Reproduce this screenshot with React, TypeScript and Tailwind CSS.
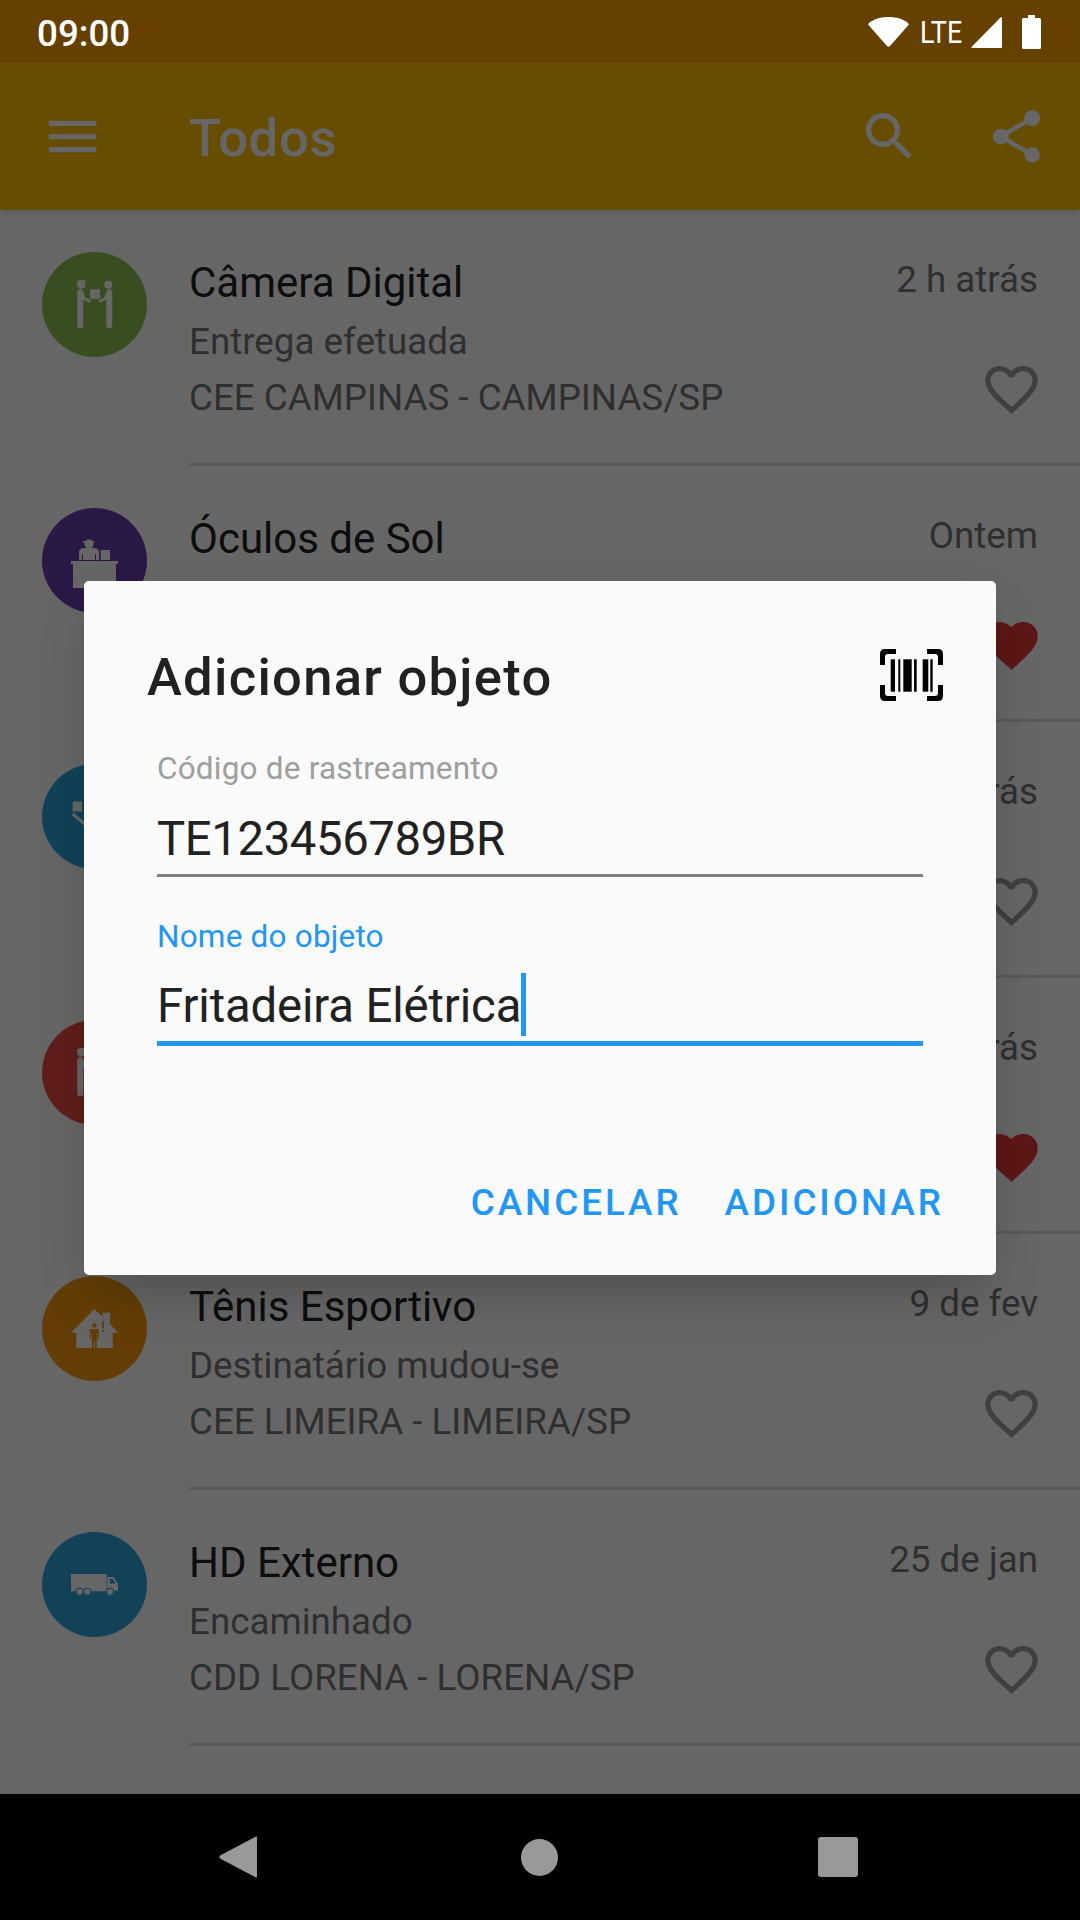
import React from 'react';
import { MdMenu, MdSearch, MdShare, MdFavorite, MdFavoriteBorder } from 'react-icons/md';

function HandoffIcon() {
  return (
    <svg viewBox="0 0 105 105" className="w-[105px] h-[105px]" fill="#fff">
      <circle cx="39.300" cy="32.700" r="4" />
      <path d="M34.500 31q1-3 5-3t5 1.500l-2 1.500Z" />
      <circle cx="66.300" cy="32.700" r="4" />
      <rect x="48" y="37.300" width="10" height="9.400" />
      <rect x="35.300" y="37.300" width="6" height="39" rx="3" />
      <rect x="64.300" y="37.300" width="6" height="39" rx="3" />
      <path d="M39.500 40l2.500 6.500 6.500 3" stroke="#fff" strokeWidth="3" fill="none" />
      <path d="M66.100 40l-2.500 6.500-6.500 3" stroke="#fff" strokeWidth="3" fill="none" />
    </svg>
  );
}

function DeskIcon() {
  return (
    <svg viewBox="0 0 105 105" className="w-[105px] h-[105px]" fill="#fff">
      <circle cx="47" cy="36" r="4.500" />
      <path d="M41 33h11v2H41Z" />
      <path d="M37 52v-7q0-5 5-5h10q5 0 5 5v7h-3v-6h-1v6H41v-6h-1v6Z" />
      <rect x="58.700" y="42" width="9.300" height="10" />
      <rect x="29" y="53" width="47" height="3" />
      <rect x="31" y="56" width="43" height="24" />
    </svg>
  );
}

function PackageIcon() {
  return (
    <svg viewBox="0 0 105 105" className="w-[105px] h-[105px]" fill="#fff">
      <rect x="30.700" y="37.500" width="9.300" height="10" />
      <path d="M30.700 50 45 62" stroke="#fff" strokeWidth="3" fill="none" />
    </svg>
  );
}

function HouseIcon({ color }: { color: string }) {
  return (
    <svg viewBox="0 0 105 105" className="w-[105px] h-[105px]" fill="#fff">
      <path d="M52.300 33 60.700 41V36.700H68V48L76 56.700H70.700V72H34.300V56.700H29Z" />
      <circle cx="52.300" cy="49.500" r="2.200" fill={color} />
      <path d="M47.800 53h9v9.500h-1.300V57h-.7v15h-2.100v-7h-.8v7h-2.100V57h-.7v5.500h-1.300Z" fill={color} />
      <rect x="60.200" y="45" width="1.800" height="7.500" fill={color} />
      <rect x="60.200" y="54" width="1.800" height="1.800" fill={color} />
    </svg>
  );
}

function TruckIcon({ color }: { color: string }) {
  return (
    <svg viewBox="0 0 105 105" className="w-[105px] h-[105px]" fill="#fff">
      <rect x="29" y="42" width="35.700" height="17.300" />
      <path d="M65.300 45h6.500l3 5.500 1.200 1.500v6.500l-10.700.8Z" />
      <path d="M67.800 47h3.200l2.300 4.500h-5.500Z" fill={color} />
      <circle cx="37.700" cy="59.700" r="4" fill={color} />
      <circle cx="45.300" cy="59.700" r="4" fill={color} />
      <circle cx="68" cy="59.700" r="4" fill={color} />
      <circle cx="37.700" cy="59.700" r="3" />
      <circle cx="45.300" cy="59.700" r="3" />
      <circle cx="68" cy="59.700" r="3" />
    </svg>
  );
}

const items = [
  { color: '#8FC352', icon: <HandoffIcon />, title: 'Câmera Digital', time: '2 h atrás', status: 'Entrega efetuada', place: 'CEE CAMPINAS - CAMPINAS/SP', fav: false },
  { color: '#6A3FB0', icon: <DeskIcon />, title: 'Óculos de Sol', time: 'Ontem', status: '', place: '', fav: true },
  { color: '#2BA6DC', icon: <PackageIcon />, title: '', time: '3 d atrás', status: '', place: '', fav: false },
  { color: '#F04B45', icon: <HandoffIcon />, title: '', time: '5 d atrás', status: '', place: '', fav: true },
  { color: '#FA9A0F', icon: <HouseIcon color="#FA9A0F" />, title: 'Tênis Esportivo', time: '9 de fev', status: 'Destinatário mudou-se', place: 'CEE LIMEIRA - LIMEIRA/SP', fav: false },
  { color: '#2BA6DC', icon: <TruckIcon color="#2BA6DC" />, title: 'HD Externo', time: '25 de jan', status: 'Encaminhado', place: 'CDD LORENA - LORENA/SP', fav: false },
];

export default function App() {
  return (
    <div className="w-[1080px] h-[1920px] flex flex-col overflow-hidden bg-black font-['Roboto',sans-serif]">
      {/* status bar */}
      <div className="h-[63px] shrink-0 bg-[#664000] flex items-center pl-[37px] text-white">
        <span className="pt-[5px] text-[36.750px] font-medium">09:00</span>
        <div className="ml-auto flex items-center pr-[39px]">
          <svg viewBox="0 0 41 30" className="w-[41px] h-[30px] fill-white">
            <path d="M19 29 0.500 8Q0 7 1 6C6 2 12 0 20.500 0S35 2 40 6Q41 7 40.500 8L22 29Q20.500 30.500 19 29Z" />
          </svg>
          <span className="ml-[11px] w-[43px] text-[32px] leading-none origin-left scale-x-[.84]">LTE</span>
          <svg viewBox="0 0 31 31" className="mt-[2px] ml-[8px] w-[31px] h-[31px] fill-white">
            <path d="M31 1V30Q31 31 30 31H1Q0 31 0.500 30L29.500 0.500Q31 0 31 1Z" />
          </svg>
          <svg viewBox="0 0 19 34" className="ml-[20px] w-[19px] h-[34px] fill-white">
            <path d="M6 0H13V3H17.500Q19 3 19 4.500V32.500Q19 34 17.500 34H1.500Q0 34 0 32.500V4.500Q0 3 1.500 3H6Z" />
          </svg>
        </div>
      </div>

      <div className="relative flex-1 overflow-hidden bg-white">
        {/* toolbar */}
        <div className="h-[147px] bg-[#FFC107] flex items-center pl-[41px] pr-[32px] text-white shadow-md relative">
          <MdMenu size={63} />
          <span className="ml-[85px] pt-[4px] text-[52.500px] font-medium tracking-[.7px]">Todos</span>
          <div className="ml-auto flex gap-[64px]">
            <MdSearch size={63} />
            <MdShare size={63} />
          </div>
        </div>

        {/* list */}
        <div className="flex flex-col">
          {items.map((item, i) => (
            <div key={i} className="h-[256px] flex pl-[42px]">
              <div className="w-[105px] h-[105px] mt-[42px] rounded-full shrink-0" style={{ backgroundColor: item.color }}>
                {item.icon}
              </div>
              <div className="ml-[42px] flex-1 flex justify-between pr-[42px] border-b-[3px] border-[#dfdfdf]">
                <div className="pt-[48px] flex flex-col">
                  <div className="h-[50px] leading-[50px] text-[42px] text-[#212121]">{item.title}</div>
                  <div className="h-[46px] leading-[46px] mt-[11px] text-[36.750px] text-[#757575]">{item.status}</div>
                  <div className="h-[46px] leading-[46px] mt-[10px] text-[36.750px] text-[#757575]">{item.place}</div>
                </div>
                <div className="pt-[45px] flex flex-col items-end">
                  <div className="h-[50px] leading-[50px] text-[36.750px] text-[#757575]">{item.time}</div>
                  <div className="mt-[53px] -mr-[5px]">
                    {item.fav ? <MdFavorite size={63} color="#E53935" /> : <MdFavoriteBorder size={63} color="#9e9e9e" />}
                  </div>
                </div>
              </div>
            </div>
          ))}
        </div>

        {/* scrim + dialog */}
        <div className="absolute inset-0 bg-black/60 flex items-center justify-center">
          <div className="-mt-[2px] w-[912px] h-[694px] bg-[#fafafa] rounded-[5px] shadow-2xl flex flex-col">
            <div className="mt-[67px] h-[60px] pl-[63px] pr-[53px] flex items-center justify-between">
              <span className="text-[52.500px] font-medium tracking-[1.300px] text-[#212121]">Adicionar objeto</span>
              <svg viewBox="0 0 63 52" className="mb-[6px] w-[63px] h-[52px]" fill="#000">
                <path d="M0 16V5Q0 0 5 0H16V5H8Q5 5 5 8V16Z" />
                <path d="M63 16V5Q63 0 58 0H47V5H55Q58 5 58 8V16Z" />
                <path d="M0 36V47Q0 52 5 52H16V47H8Q5 47 5 44V36Z" />
                <path d="M63 36V47Q63 52 58 52H47V47H55Q58 47 58 44V36Z" />
                <rect x="10.700" y="10.300" width="4.300" height="32.400" />
                <rect x="18.300" y="10.300" width="2" height="32.400" />
                <rect x="23.300" y="10.300" width="8.400" height="32.400" />
                <rect x="34" y="10.300" width="2.700" height="32.400" />
                <rect x="42.700" y="10.300" width="5.600" height="32.400" />
                <rect x="50.300" y="10.300" width="2.400" height="32.400" />
              </svg>
            </div>
            <div className="mt-[42px] mx-[73px]">
              <div className="h-[38px] leading-[38px] text-[31.500px] tracking-[.2px] text-[#9e9e9e]">Código de rastreamento</div>
              <div className="mt-[21px] h-[68px] leading-[60px] text-[47.250px] tracking-[-.38px] text-[#212121] border-b-[3px] border-[#808080]">TE123456789BR</div>
            </div>
            <div className="mt-[41px] mx-[73px]">
              <div className="h-[38px] leading-[38px] text-[31.500px] tracking-[.2px] text-[#2196F3]">Nome do objeto</div>
              <div className="relative mt-[20px] h-[70px] leading-[60px] text-[47.250px] tracking-[-.13px] text-[#212121] border-b-[5px] border-[#2196F3]">
                Fritadeira Elétrica
                <span className="absolute left-[364px] -top-[3px] w-[5px] h-[63px] bg-[#2196F3]" />
              </div>
            </div>
            <div className="mt-[137px] pr-[52px] flex justify-end gap-[43px] h-[40px] leading-[40px] text-[36.750px] font-medium tracking-[3px] text-[#2196F3]">
              <span>CANCELAR</span>
              <span>ADICIONAR</span>
            </div>
          </div>
        </div>
      </div>

      {/* nav bar */}
      <div className="h-[126px] shrink-0 bg-black flex items-center">
        <svg viewBox="0 0 38 42" className="ml-[219px] w-[38px] h-[42px] fill-[#999999]">
          <path d="M37 0.500Q38 0 38 1.500V40.500Q38 42 37 41.500L1 22.500Q0 21 1 19.500Z" />
        </svg>
        <div className="ml-[264px] w-[37px] h-[37px] rounded-full bg-[#999999]" />
        <div className="ml-[260px] w-[40px] h-[40px] rounded-[3px] bg-[#999999]" />
      </div>
    </div>
  );
}
